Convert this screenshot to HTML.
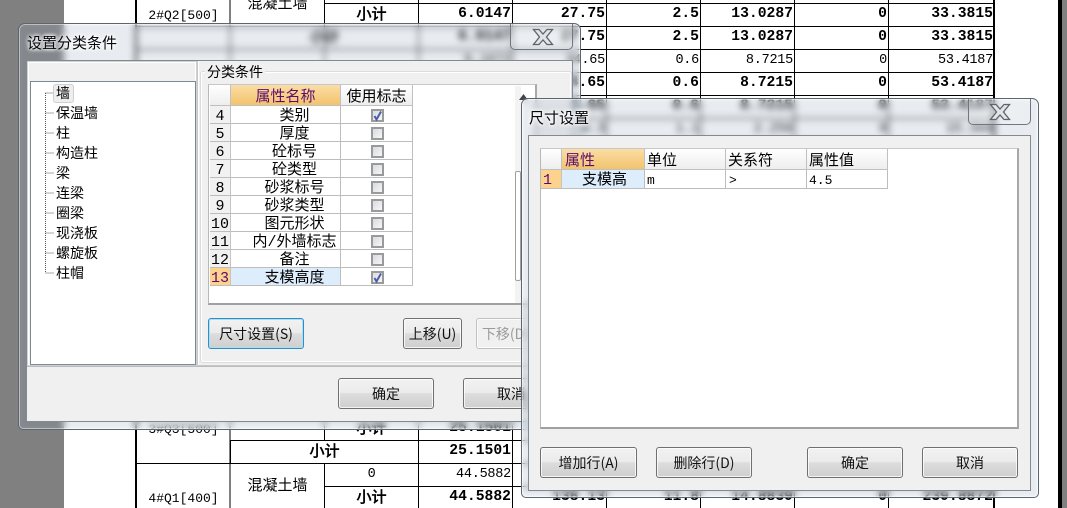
<!DOCTYPE html>
<html><head><meta charset="utf-8">
<style>
html,body{margin:0;padding:0;width:1067px;height:508px;overflow:hidden;background:#808080}
body{position:relative;font-family:"Liberation Sans","WenQuanYi Zen Hei",sans-serif;color:#000}
div,svg,button{position:absolute;box-sizing:border-box}
#page{left:64px;top:0;width:994px;height:508px;background:#fff}
#blk{left:1058px;top:0;width:4px;height:508px;background:#000}
.n{font:13.5px/24px "Liberation Mono",monospace;letter-spacing:-.25px;text-align:right;height:23px;white-space:pre}
.b{font:bold 14.7px/23px "Liberation Mono",monospace;letter-spacing:0}
.c1{left:418px;width:93px}.c2{left:512px;width:93px}.c3{left:606px;width:93px}.c4{left:700px;width:93px}.c5{left:794px;width:93px}.c6{left:888px;width:105px}
.z{font:15px/23px "Liberation Mono","WenQuanYi Zen Hei",monospace;text-align:center;height:23px;white-space:nowrap}
.q{font-size:13px;line-height:25px}
.x{font:bold 15px/23px "Liberation Sans","WenQuanYi Zen Hei",sans-serif}
.glass{backdrop-filter:blur(3.5px) brightness(.93);background:rgba(205,228,252,.16);border:1px solid #5c6670;border-radius:7px 7px 5px 5px;box-shadow:inset 0 0 0 1px rgba(255,255,255,.45)}
.close{border:1px solid #6f7880;border-top:0;border-radius:0 0 5px 5px;background:rgba(255,255,255,.18);height:26px}
.title{font:15px/20px "WenQuanYi Zen Hei","Noto Sans CJK SC",sans-serif;color:#05060a;text-shadow:0 0 5px #fff,0 0 5px #fff,0 0 3px #fff;white-space:nowrap}
.body{background:#f0f0f0;border:1px solid #7f8a94}
.btn{border:1px solid #707070;border-radius:3px;background:linear-gradient(#f2f2f2 0,#ebebeb 48%,#dddddd 50%,#cfcfcf 100%);box-shadow:inset 0 0 0 1px rgba(255,255,255,.75);font:14px/30px "WenQuanYi Zen Hei","Noto Sans CJK SC",sans-serif;text-align:center;color:#111;white-space:nowrap;overflow:hidden}
.g{background:#fff;border:1px solid #b8b8b8;border-bottom:2px solid #a0a0a0;border-right:2px solid #a8a8a8;border-top-color:#c8c8c8}
.h{background:linear-gradient(#fff,#eeeeee);border-right:1px solid #c0c0c0;border-bottom:1px solid #c0c0c0;font:15px/21px "WenQuanYi Zen Hei","Noto Sans CJK SC",sans-serif;text-align:center;white-space:nowrap}
.o{background:linear-gradient(#fbdda6,#f2c46c);color:#5b0a70}
.c{background:#fff;border-right:1px solid #bdbdbd;border-bottom:1px solid #bdbdbd;font:15px/21px "Liberation Mono","WenQuanYi Zen Hei",monospace;text-align:center;white-space:nowrap;height:18px;overflow:hidden}
.p{padding-left:18px}
.i{background:#f1f1f1;border-right:1px solid #c4c4c4;font:15px/21px "Liberation Mono","WenQuanYi Zen Hei",monospace;left:210px;width:21px;height:18px;text-align:center;border-bottom:1px solid #bdbdbd;overflow:hidden}
.ck{left:371px;width:13px;height:13px;border:2px solid #9a9a9a;background:linear-gradient(135deg,#d8dbe0,#f6f6f6)}
.t{left:56px;font:14px/20px "WenQuanYi Zen Hei","Noto Sans CJK SC",sans-serif;height:20px;white-space:nowrap}
</style></head><body>
<div id="page"></div><div id="blk"></div>

<svg style="left:0;top:0" width="1067" height="508" viewBox="0 0 1067 508" shape-rendering="crispEdges">
<g stroke="#000" stroke-width="1" fill="none">
<path d="M230 0V508M324.5 0V508M418.5 0V508M512.5 0V508M606.5 0V508M700.5 0V508M794.5 0V508M888.5 0V508"/>
<path d="M324 3.5H995M136 26.5H995M136 49.5H995M136 72.5H995M136 95.5H995M136 118.5H995M136 141.5H995M136 417.5H995M230 440.5H995M136 463.5H995M324 486.5H995"/>
</g>
<path d="M136 0V508" stroke="#000" stroke-width="2"/>
<path d="M994 0V508" stroke="#000" stroke-width="2"/>
<rect x="231" y="441" width="187" height="22" fill="#fff"/>
<path d="M230.5 440V463" stroke="#000"/>
<path d="M418.5 440V463" stroke="#000"/>
</svg>

<div class="z q" style="left:137px;width:93px;top:3px">2#Q2[500]</div>
<div class="z" style="left:231px;width:93px;top:-7px">混凝土墙</div>
<div class="z x" style="left:325px;width:93px;top:3px">小计</div>
<div class="n b c1" style="top:3px">6.0147</div><div class="n b c2" style="top:3px">27.75</div><div class="n b c3" style="top:3px">2.5</div><div class="n b c4" style="top:3px">13.0287</div><div class="n b c5" style="top:3px">0</div><div class="n b c6" style="top:3px">33.3815</div>

<div class="z x" style="left:231px;width:187px;top:26px">小计</div>
<div class="n b c1" style="top:26px">6.0147</div><div class="n b c2" style="top:26px">27.75</div><div class="n b c3" style="top:26px">2.5</div><div class="n b c4" style="top:26px">13.0287</div><div class="n b c5" style="top:26px">0</div><div class="n b c6" style="top:26px">33.3815</div>

<div class="n c1" style="top:49px">9.1672</div><div class="n c2" style="top:49px">34.65</div><div class="n c3" style="top:49px">0.6</div><div class="n c4" style="top:49px">8.7215</div><div class="n c5" style="top:49px">0</div><div class="n c6" style="top:49px">53.4187</div>

<div class="n b c1" style="top:72px">9.1672</div><div class="n b c2" style="top:72px">34.65</div><div class="n b c3" style="top:72px">0.6</div><div class="n b c4" style="top:72px">8.7215</div><div class="n b c5" style="top:72px">0</div><div class="n b c6" style="top:72px">53.4187</div>

<div class="n b c1" style="top:95px">9.1672</div><div class="n b c2" style="top:95px">34.65</div><div class="n b c3" style="top:95px">0.6</div><div class="n b c4" style="top:95px">8.7215</div><div class="n b c5" style="top:95px">0</div><div class="n b c6" style="top:95px">53.4187</div>

<div class="n c1" style="top:118px">4.14</div><div class="n c2" style="top:118px">9.3</div><div class="n c3" style="top:118px">1.1</div><div class="n c4" style="top:118px">2.256</div><div class="n c5" style="top:118px">0</div><div class="n c6" style="top:118px">15.344</div>

<div class="z q" style="left:137px;width:93px;top:417px">3#Q3[500]</div>
<div class="z x" style="left:325px;width:93px;top:417px">小计</div>
<div class="n b c1" style="top:417px">25.1501</div>
<div class="z x" style="left:231px;width:187px;top:440px">小计</div>
<div class="n b c1" style="top:440px">25.1501</div>
<div class="z q" style="left:137px;width:93px;top:486px">4#Q1[400]</div>
<div class="z" style="left:231px;width:93px;top:475px">混凝土墙</div>
<div class="n" style="left:325px;width:93px;top:463px;text-align:center">0</div>
<div class="n c1" style="top:463px">44.5882</div>
<div class="z x" style="left:325px;width:93px;top:486px">小计</div>
<div class="n b c1" style="top:486px">44.5882</div><div class="n b c2" style="top:486px">138.13</div><div class="n b c3" style="top:486px">11.8</div><div class="n b c4" style="top:486px">14.8839</div><div class="n b c5" style="top:486px">0</div><div class="n b c6" style="top:486px">239.8872</div>

<!-- Dialog 1 -->
<div class="glass" style="left:18px;top:23px;width:563px;height:407px"></div>
<div class="close" style="left:510px;top:24px;width:63px"></div>
<svg style="left:532px;top:28px" width="22" height="18" viewBox="0 0 22 18"><path d="M1.500 1.500H7L11 6L15 1.500H20.500L14.500 9L20.500 16.500H15L11 12L7 16.500H1.500L7.500 9Z" fill="#e2e4e6" stroke="#5d646b" stroke-width="1.300"/></svg>
<div class="title" style="left:27px;top:33px">设置分类条件</div>
<div class="body" style="left:26px;top:60px;width:547px;height:362px"></div>
<div style="left:27px;top:61px;width:170px;height:305px;border:1px solid #d0d0d0;background:#f0f0f0;box-shadow:inset 0 0 0 1px #fff"></div>
<div style="left:197px;top:61px;width:375px;height:305px;border-left:1px solid #c4c8cc;border-bottom:1px solid #c8c8c8;box-shadow:inset 1px 0 0 #fff"></div>
<div style="left:27px;top:366px;width:545px;height:1px;background:#b8bcc0"></div>
<div style="left:30px;top:81px;width:166px;height:284px;background:#fff;border:1px solid #7c8a96"></div>
<svg style="left:30px;top:81px" width="166" height="220"><path d="M15.500 12V192M15.500 12H24M15.500 32H24M15.500 52H24M15.500 72H24M15.500 92H24M15.500 112H24M15.500 132H24M15.500 152H24M15.500 172H24M15.500 192H24" stroke="#555" stroke-dasharray="1 1" fill="none" shape-rendering="crispEdges"/></svg>
<div style="left:53px;top:84px;width:21px;height:19px;background:#eeeeee;border:1px solid #cfcfcf;border-radius:3px"></div>
<div class="t" style="top:83px">墙</div><div class="t" style="top:103px">保温墙</div><div class="t" style="top:123px">柱</div><div class="t" style="top:143px">构造柱</div><div class="t" style="top:163px">梁</div><div class="t" style="top:183px">连梁</div><div class="t" style="top:203px">圈梁</div><div class="t" style="top:223px">现浇板</div><div class="t" style="top:243px">螺旋板</div><div class="t" style="top:263px">柱帽</div>

<div style="left:200px;top:71px;width:372px;height:292px;border:1px solid #dcdcdc;border-radius:3px;box-shadow:inset 0 0 0 1px #fff"></div>
<div style="left:205px;top:63px;width:60px;height:18px;background:#f0f0f0;font:14px/18px 'WenQuanYi Zen Hei','Noto Sans CJK SC',sans-serif;white-space:nowrap;padding-left:2px">分类条件</div>
<div class="g" style="left:208px;top:84px;width:329px;height:221px"></div>
<div class="h" style="left:210px;top:85px;width:21px;height:21px"></div>
<div class="h o" style="left:231px;top:85px;width:110px;height:21px">属性名称</div>
<div class="h" style="left:341px;top:85px;width:72px;height:21px">使用标志</div>
<div style="left:515px;top:86px;width:6px;height:217px;background:#f3f3f3"></div>
<div style="left:515px;top:171px;width:6px;height:110px;background:#fff;border:1px solid #a0a0a0;border-radius:2px"></div>
<svg style="left:519px;top:94px" width="10" height="7"><path d="M4.500 0L9 6H0Z" fill="#444"/></svg>

<div class="i" style="top:106px">4</div><div class="c p" style="left:231px;width:110px;top:106px">类别</div><div class="c" style="left:341px;width:72px;top:106px"></div>
<div class="i" style="top:124px">5</div><div class="c p" style="left:231px;width:110px;top:124px">厚度</div><div class="c" style="left:341px;width:72px;top:124px"></div>
<div class="i" style="top:142px">6</div><div class="c p" style="left:231px;width:110px;top:142px">砼标号</div><div class="c" style="left:341px;width:72px;top:142px"></div>
<div class="i" style="top:160px">7</div><div class="c p" style="left:231px;width:110px;top:160px">砼类型</div><div class="c" style="left:341px;width:72px;top:160px"></div>
<div class="i" style="top:178px">8</div><div class="c p" style="left:231px;width:110px;top:178px">砂浆标号</div><div class="c" style="left:341px;width:72px;top:178px"></div>
<div class="i" style="top:196px">9</div><div class="c p" style="left:231px;width:110px;top:196px">砂浆类型</div><div class="c" style="left:341px;width:72px;top:196px"></div>
<div class="i" style="top:214px">10</div><div class="c p" style="left:231px;width:110px;top:214px">图元形状</div><div class="c" style="left:341px;width:72px;top:214px"></div>
<div class="i" style="top:232px">11</div><div class="c p" style="left:231px;width:110px;top:232px">内/外墙标志</div><div class="c" style="left:341px;width:72px;top:232px"></div>
<div class="i" style="top:250px">12</div><div class="c p" style="left:231px;width:110px;top:250px">备注</div><div class="c" style="left:341px;width:72px;top:250px"></div>
<div class="i o" style="top:268px;background:#fdd28c">13</div><div class="c p" style="left:231px;width:110px;top:268px;background:#deedfc">支模高度</div><div class="c" style="left:341px;width:72px;top:268px"></div>

<div class="ck" style="top:109px"></div><div class="ck" style="top:127px"></div><div class="ck" style="top:145px"></div><div class="ck" style="top:163px"></div><div class="ck" style="top:181px"></div><div class="ck" style="top:199px"></div><div class="ck" style="top:217px"></div><div class="ck" style="top:235px"></div><div class="ck" style="top:253px"></div><div class="ck" style="top:271px"></div>
<svg style="left:371px;top:109px" width="13" height="13"><path d="M3.500 7L5.500 10.500L10 2.500" stroke="#4a5ea8" stroke-width="2" fill="none"/></svg>
<svg style="left:371px;top:271px" width="13" height="13"><path d="M3.500 7L5.500 10.500L10 2.500" stroke="#4a5ea8" stroke-width="2" fill="none"/></svg>

<div class="btn" style="left:208px;top:318px;width:96px;height:31px;border-color:#2f8fc4;box-shadow:inset 0 0 0 1px #a8e0f6">尺寸设置(S)</div>
<div class="btn" style="left:403px;top:318px;width:59px;height:31px">上移(U)</div>
<div class="btn" style="left:476px;top:318px;width:59px;height:31px;background:#f0f0f0;color:#9a9a9a;border-color:#c0c0c0">下移(D)</div>
<div class="btn" style="left:338px;top:378px;width:96px;height:31px">确定</div>
<div class="btn" style="left:463px;top:378px;width:96px;height:31px">取消</div>

<!-- Dialog 2 -->
<div class="glass" style="left:521px;top:98px;width:518px;height:400px"></div>
<div class="close" style="left:968px;top:99px;width:63px"></div>
<svg style="left:989px;top:103px" width="22" height="18" viewBox="0 0 22 18"><path d="M1.500 1.500H7L11 6L15 1.500H20.500L14.500 9L20.500 16.500H15L11 12L7 16.500H1.500L7.500 9Z" fill="#e2e4e6" stroke="#5d646b" stroke-width="1.300"/></svg>
<div class="title" style="left:529px;top:108px">尺寸设置</div>
<div class="body" style="left:528px;top:135px;width:503px;height:356px"></div>
<div class="g" style="left:540px;top:148px;width:479px;height:281px"></div>
<div class="h" style="left:541px;top:149px;width:21px;height:21px"></div>
<div class="h o" style="left:562px;top:149px;width:83px;height:21px;text-align:left;padding-left:3px">属性</div>
<div class="h" style="left:645px;top:149px;width:81px;height:21px;text-align:left;padding-left:2px">单位</div>
<div class="h" style="left:726px;top:149px;width:81px;height:21px;text-align:left;padding-left:2px">关系符</div>
<div class="h" style="left:807px;top:149px;width:81px;height:21px;text-align:left;padding-left:2px">属性值</div>
<div class="i" style="left:541px;top:170px;background:#fdd28c;color:#5b0a70;text-align:left;padding-left:2px;height:19px">1</div>
<div class="c" style="left:562px;width:83px;top:170px;height:19px;background:#deedfc;padding-left:3px">支模高</div>
<div class="c" style="left:645px;width:81px;top:170px;height:19px;text-align:left;padding-left:2px;font-size:13px">m</div>
<div class="c" style="left:726px;width:81px;top:170px;height:19px;text-align:left;padding-left:3px;font-size:13px">&gt;</div>
<div class="c" style="left:807px;width:81px;top:170px;height:19px;text-align:left;padding-left:2px;font-size:13px">4.5</div>
<div class="btn" style="left:540px;top:447px;width:97px;height:31px">增加行(A)</div>
<div class="btn" style="left:656px;top:447px;width:96px;height:31px">删除行(D)</div>
<div class="btn" style="left:807px;top:447px;width:96px;height:31px">确定</div>
<div class="btn" style="left:922px;top:447px;width:96px;height:31px">取消</div>
</body></html>
